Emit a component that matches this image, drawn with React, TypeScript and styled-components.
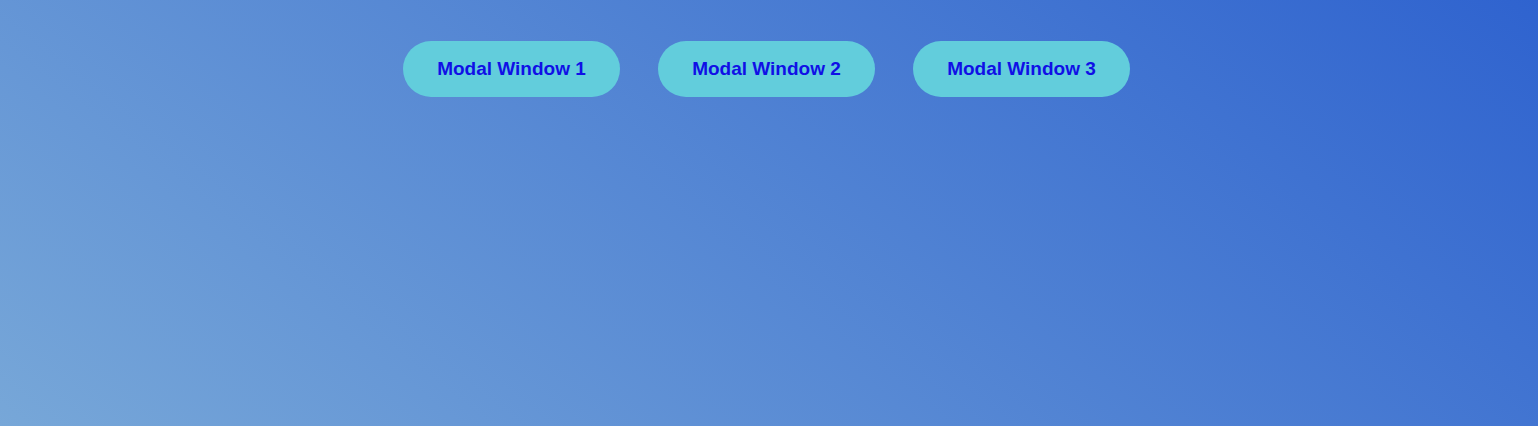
import React from 'react';
import styled, { createGlobalStyle } from 'styled-components';

const GlobalStyle = createGlobalStyle`
    html, body {
        margin: 0;
        padding: 0;
        height: 100%;
    }
    #root {
        min-height: 100vh;
    }
`

const Page = styled.div`
    min-height: 100vh;
    box-sizing: border-box;
    background: linear-gradient(38deg, #77a7d8, #2f63cf);
    font-family: "Liberation Sans", Arial, sans-serif;
    padding-top: 41px;
`

const ButtonRow = styled.div`
    display: flex;
    justify-content: center;
    gap: 38px;
    padding-right: 5px;
`

const ModalButton = styled.button`
    width: 217px;
    height: 56px;
    padding: 0;
    border: none;
    border-radius: 28px;
    background-color: #62cddc;
    color: #1010e6;
    font-family: "Liberation Sans", Arial, sans-serif;
    font-size: 19px;
    font-weight: bold;
    cursor: pointer;
`

function App(): React.ReactElement {
  return (
    <Page>
        <GlobalStyle />
        <ButtonRow>
            {
                [1, 2, 3].map((n) => (
                    <ModalButton type='button' key={n}>Modal Window {n}</ModalButton>
                ))
            }
        </ButtonRow>
    </Page>
  );
}

export default App;
